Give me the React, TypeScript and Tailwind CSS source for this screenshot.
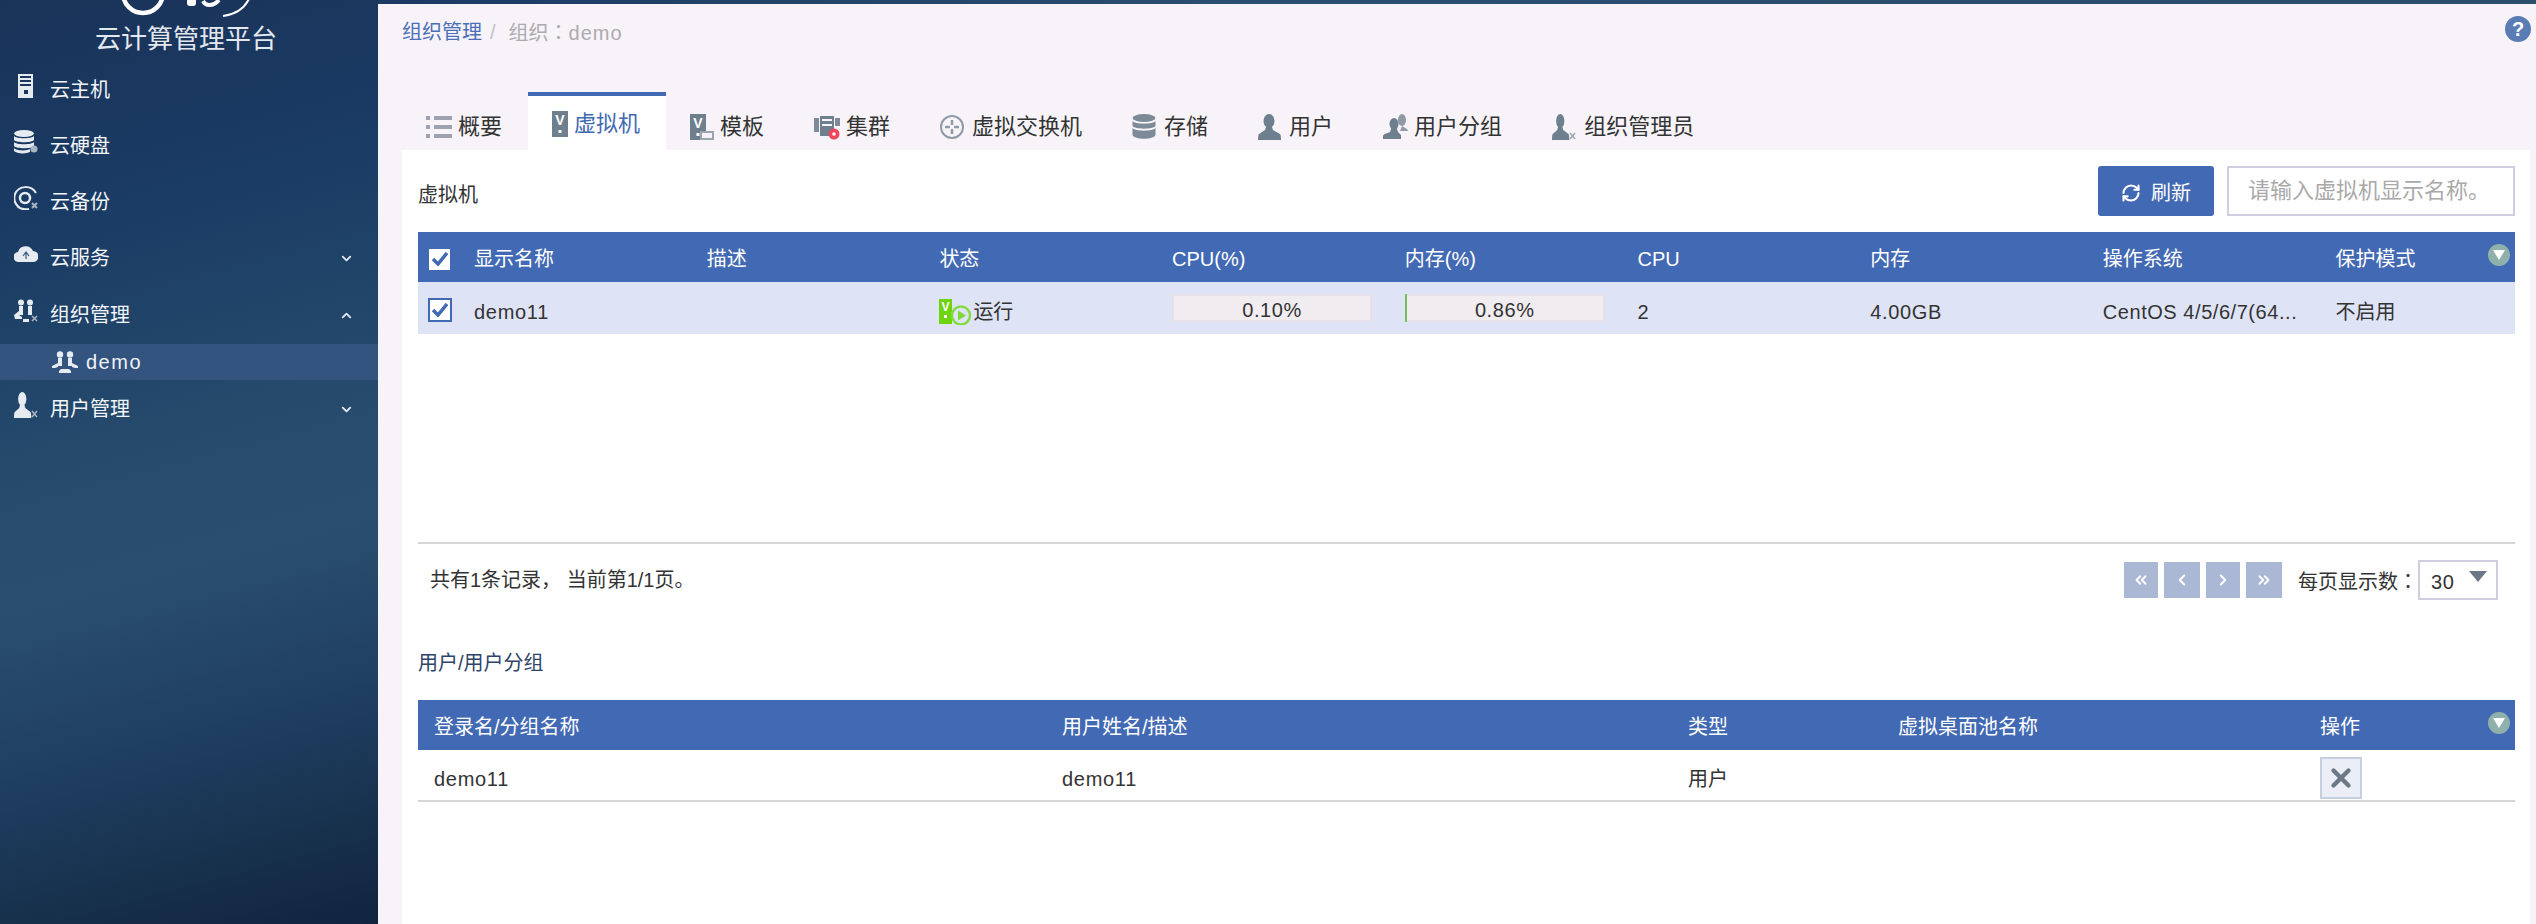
import { ReactNode } from "react"
import { ChevronDown, ChevronLeft, ChevronRight, ChevronUp, ChevronsLeft, ChevronsRight, RefreshCw, X } from "lucide-react"

const FONT = "font-['Liberation_Sans','Noto_Sans_CJK_SC',sans-serif]"
const COLON = "font-['Noto_Sans_CJK_TC',sans-serif]"

//person silhouette used by most of the user related icons
const Person = ({ sx = 1, fill }: { sx?: number; fill: string }) => (
    <g transform={`scale(${sx} 1)`} fill={fill}>
        <ellipse cx="11" cy="7" rx="5.5" ry="7" />
        <path d="M8 13h6l1 3 7 4c1 1 1 4 1 6H0c0-2 0-5 1-6l6-4z" />
    </g>
)

const IconServer = () => (
    <svg width="24" height="24" viewBox="0 0 24 24">
        <path fill="#e6ebf2" fillRule="evenodd" d="M4 0h15v24H4zM6 2v2h11V2zM6 6v2h11V6zM6 10v2h11v-2zM10 16v4h4v-4z" />
    </svg>
)

const IconDisk = ({ fill = "#e6ebf2" }: { fill?: string }) => (
    <svg width="24" height="24" viewBox="0 0 24 24" fill={fill}>
        <ellipse cx="10" cy="3.5" rx="10" ry="3.5" />
        <path d="M0 6c2 3 18 3 20 0v4c-2 3-18 3-20 0z" />
        <path d="M0 12c2 3 18 3 20 0v4c-2 3-18 3-20 0z" />
        <path d="M0 18c2 3 13 3 16 1v3c-4 2-13 2-16-1z" />
        <circle cx="20" cy="19" r="3.5" fill="#aab6c4" />
    </svg>
)

const IconBackup = () => (
    <svg width="24" height="24" viewBox="0 0 24 24" fill="none" stroke="#e6ebf2" strokeWidth="2">
        <path d="M22 7C17-1 5-1 1 8c-1 3-1 5 0 8 3 7 9 8 14 7" />
        <circle cx="11" cy="12" r="5" strokeWidth="2.5" />
        <path d="M18 17l5 5M23 17l-5 5" stroke="#aab6c4" />
    </svg>
)

const IconCloud = () => (
    <svg width="24" height="18" viewBox="0 0 24 18">
        <path fill="#e6ebf2" d="M5 17a5 5 0 0 1-1-10 8 8 0 0 1 15-1 5.500 5.500 0 0 1 0 11z" />
        <path fill="none" stroke="#3a5a80" strokeWidth="1.200" d="M9 11l3-4 3 4M12 8v6" />
    </svg>
)

const IconOrg = () => (
    <svg width="24" height="24" viewBox="0 0 24 24" fill="#e6ebf2">
        <circle cx="7" cy="3.500" r="3" />
        <circle cx="16" cy="3.500" r="3" />
        <path d="M5 7h4v9H5zM14 7h4v9h-4z" />
        <path d="M0 16l5-4v4l3 2v2H1zM9 20h6v3H9z" />
        <path d="M18 17l5 5M23 17l-5 5" stroke="#aab6c4" strokeWidth="1.500" />
    </svg>
)

const IconGroup = () => (
    <svg width="26" height="22" viewBox="0 0 26 22" fill="#e6ebf2">
        <circle cx="8" cy="3.500" r="3.200" />
        <circle cx="18" cy="3.500" r="3.200" />
        <path d="M6 7h4v8H6zM16 7h4v8h-4z" />
        <path d="M0 15l6-3v4l-3 1H0zM26 15l-6-3v4l3 1h3z" />
        <path d="M9 18h8l2 2v2H7v-2z" />
    </svg>
)

const IconUserAdmin = ({ fill = "#e6ebf2", cross = "#aab6c4" }: { fill?: string; cross?: string }) => (
    <svg width="24" height="26" viewBox="0 0 24 26">
        <Person fill={fill} sx={0.75} />
        <path d="M18 19l5 6M23 19l-5 6" stroke={cross} strokeWidth="1.500" />
    </svg>
)

const IconList = () => (
    <svg width="26" height="22" viewBox="0 0 26 22" fill="#9ca2b0">
        <rect y="0" width="4" height="4" />
        <rect x="8" y="0" width="18" height="4" />
        <rect y="9" width="4" height="4" />
        <rect x="8" y="9" width="18" height="4" />
        <rect y="18" width="4" height="4" />
        <rect x="8" y="18" width="18" height="4" />
    </svg>
)

const VBox = ({ fill = "#6e7f8e" }: { fill?: string }) => (
    <g>
        <rect width="16" height="26" fill={fill} />
        <text x="8" y="14" textAnchor="middle" fontSize="14" fontWeight="700" fill="#fff" fontFamily="Liberation Sans">V</text>
        <rect x="6.500" y="19" width="3" height="3" fill="#fff" />
    </g>
)

const IconVm = () => (
    <svg width="16" height="26" viewBox="0 0 16 26"><VBox /></svg>
)

const IconTemplate = () => (
    <svg width="24" height="26" viewBox="0 0 24 26">
        <VBox />
        <rect x="11" y="18" width="12" height="7" fill="#f6f2f7" stroke="#9aa5b0" strokeWidth="2" />
    </svg>
)

const IconCluster = () => (
    <svg width="26" height="26" viewBox="0 0 26 26">
        <path fill="#7d8b99" d="M0 4h5v14H0zM21 4h5v8h-5z" />
        <path fill="#6e7f8e" fillRule="evenodd" d="M6 2h14v20H6zM8 5v2h10V5zM8 10v2h10v-2z" />
        <circle cx="20" cy="20" r="5.500" fill="#f0455a" />
        <circle cx="20" cy="20" r="1.800" fill="#fff" />
    </svg>
)

const IconSwitch = () => (
    <svg width="24" height="26" viewBox="0 0 24 26" fill="none" stroke="#8f9aa6">
        <circle cx="12" cy="13" r="11" strokeWidth="2" />
        <path d="M12 6v5M12 15v5M5 13h5M14 13h5" strokeWidth="2.500" />
    </svg>
)

const IconStorage = () => (
    <svg width="24" height="26" viewBox="0 0 24 26" fill="#7d8b99">
        <ellipse cx="12" cy="4" rx="11.500" ry="4" />
        <path d="M.5 7c2 3.500 21 3.500 23 0v5c-2 3.500-21 3.500-23 0z" />
        <path d="M.5 14c2 3.500 21 3.500 23 0v7c-2 5-21 5-23 0z" />
    </svg>
)

const IconUser = () => (
    <svg width="24" height="26" viewBox="0 0 24 26"><Person fill="#6e7f8e" /></svg>
)

const IconUserGroup = () => (
    <svg width="26" height="26" viewBox="0 0 26 26" fill="#6e7f8e">
        <ellipse cx="19" cy="6" rx="4" ry="6" fill="#8f9aa6" />
        <path d="M19 12c3 2 6 3 6 5h-8z" fill="#8f9aa6" />
        <ellipse cx="11" cy="10" rx="4.500" ry="6" />
        <path d="M8 15h6l1 3 3 3v4H0v-3c0-2 5-3 7-4z" />
    </svg>
)

const IconRunning = () => (
    <svg width="34" height="26" viewBox="0 0 34 26">
        <rect width="13" height="25" fill="#6ed40f" />
        <text x="6.500" y="12" textAnchor="middle" fontSize="12" fontWeight="700" fill="#fff" fontFamily="Liberation Sans">V</text>
        <rect x="5" y="16" width="3" height="3" fill="#fff" />
        <circle cx="22" cy="16.500" r="9" fill="#dfe3f6" stroke="#83dc3f" strokeWidth="2.500" />
        <path d="M19 11.500l8 5-8 5z" fill="#7dd835" />
    </svg>
)

const Logo = () => (
    <svg width="160" height="20" viewBox="0 0 160 20" fill="none" stroke="#fff" className="block ml-[115px]">
        <circle cx="28" cy="-7" r="20" strokeWidth="4.500" />
        <rect x="72" y="-2" width="9" height="8" rx="3" fill="#fff" stroke="none" />
        <path d="M88 1c3 6 11 5 16-1" strokeWidth="4" />
        <path d="M108 16c8-1 20-5 26-17" strokeWidth="2" />
    </svg>
)

type MenuProps = {
    icon: ReactNode
    label: string
    height: string
    arrow?: "up" | "down"
}

function MenuItem({ icon, label, height, arrow }: MenuProps) {
    return (
        <div className={`flex items-center pl-[14px] pr-[24px] text-[20px] text-[#f2f5f9] ${height}`}>
            <div className="w-6 mr-3 -mt-2 flex justify-center">{icon}</div>
            <span>{label}</span>
            {arrow === "down" && <ChevronDown size={15} strokeWidth={3} className="ml-auto text-[#dfe8f2]" />}
            {arrow === "up" && <ChevronUp size={15} strokeWidth={3} className="ml-auto text-[#dfe8f2]" />}
        </div>
    )
}

function Sidebar() {
    return (
        <div className="w-[378px] shrink-0 bg-[linear-gradient(165deg,#1a3359_0%,#1a3b64_22%,#254a6c_46%,#2a4f6e_60%,#1f3f63_76%,#18334f_88%,#11233f_100%)]">
            <div className="h-[62px]">
                <Logo />
                <div className="pl-[95px] text-[26px] leading-[38px] text-[#e3e8ef] whitespace-nowrap">云计算管理平台</div>
            </div>
            <MenuItem icon={<IconServer />} label="云主机" height="h-14" />
            <MenuItem icon={<IconDisk />} label="云硬盘" height="h-14" />
            <MenuItem icon={<IconBackup />} label="云备份" height="h-14" />
            <MenuItem icon={<IconCloud />} label="云服务" height="h-14" arrow="down" />
            <MenuItem icon={<IconOrg />} label="组织管理" height="h-[58px]" arrow="up" />
            <div className="h-9 bg-[#33547f] flex items-center pl-[52px] gap-2 text-[20px] text-[#eef2f7]">
                <IconGroup />
                <span className="tracking-[1.5px]">demo</span>
            </div>
            <MenuItem icon={<IconUserAdmin />} label="用户管理" height="h-[58px]" arrow="down" />
        </div>
    )
}

const tabs: { label: string; icon: ReactNode; gap: string; active?: boolean }[] = [
    { label: "概要", icon: <IconList />, gap: "gap-[6px]" },
    { label: "虚拟机", icon: <IconVm />, gap: "gap-[6px]", active: true },
    { label: "模板", icon: <IconTemplate />, gap: "gap-[6px]" },
    { label: "集群", icon: <IconCluster />, gap: "gap-[6px]" },
    { label: "虚拟交换机", icon: <IconSwitch />, gap: "gap-2" },
    { label: "存储", icon: <IconStorage />, gap: "gap-2" },
    { label: "用户", icon: <IconUser />, gap: "gap-[7px]" },
    { label: "用户分组", icon: <IconUserGroup />, gap: "gap-[5px]" },
    { label: "组织管理员", icon: <IconUserAdmin fill="#6e7f8e" cross="#9aa5b0" />, gap: "gap-2" },
]

function Tabs() {
    return (
        <div className="flex h-[58px] mt-8 ml-[24px] text-[22px] leading-none">
            {tabs.map(tab => (
                <div
                    key={tab.label}
                    className={tab.active
                        ? `flex items-center pl-6 pr-[26px] bg-white border-t-4 border-[#4269b3] text-[#4269b3] pt-[2px] ${tab.gap}`
                        : `flex items-center pl-6 pr-[26px] border-t-4 border-transparent text-[#333] pt-[7px] ${tab.gap}`}
                >
                    {tab.icon}
                    <span>{tab.label}</span>
                </div>
            ))}
        </div>
    )
}

const ToggleCols = () => (
    <div className="absolute right-[5px] top-[12px] w-[22px] h-[22px] rounded-full bg-[#8fb0ab] flex items-center justify-center">
        <svg width="12" height="10" viewBox="0 0 12 10"><path d="M0 0h12L6 10z" fill="#fff" /></svg>
    </div>
)

const CheckBox = ({ header }: { header?: boolean }) => (
    <div className={header
        ? "w-[21px] h-[21px] bg-white flex items-center justify-center"
        : "w-[24px] h-[24px] bg-white border-2 border-[#4269b3] flex items-center justify-center"}>
        <svg width="16" height="14" viewBox="0 0 16 14" fill="none" stroke="#4269b3" strokeWidth="3.500"><path d="M1 7l5 5 9-11" /></svg>
    </div>
)

const Progress = ({ value, barWidth }: { value: string; barWidth: number }) => (
    <div className="relative -mt-[7px] w-[200px] h-[28px] bg-[#f0ecf0] border-2 border-[#e6e1e6] text-center text-[20px] leading-[28px] tracking-[0.6px] text-[#333]">
        <div className="absolute -left-[2px] -top-[2px] -bottom-[2px] bg-[#76bd5c]" style={{ width: barWidth }} />
        {value}
    </div>
)

const vmCols = "grid grid-cols-[56px_repeat(8,232.7px)_1fr] items-center"

function VmTable() {
    return (
        <div>
            <div className={`relative ${vmCols} h-[50px] pt-1 bg-[#4269b3] text-white`}>
                <div className="pl-[11px]"><CheckBox header /></div>
                <div>显示名称</div>
                <div>描述</div>
                <div>状态</div>
                <div>CPU(%)</div>
                <div>内存(%)</div>
                <div>CPU</div>
                <div>内存</div>
                <div>操作系统</div>
                <div>保护模式</div>
                <ToggleCols />
            </div>
            <div className={`${vmCols} h-[52px] pt-[7px] bg-[#dfe3f6] text-[#333]`}>
                <div className="pl-[10px] -mt-[3px]"><CheckBox /></div>
                <div className="tracking-[0.7px]">demo11</div>
                <div />
                <div className="flex items-center"><IconRunning /><span>运行</span></div>
                <div><Progress value="0.10%" barWidth={0} /></div>
                <div><Progress value="0.86%" barWidth={2} /></div>
                <div>2</div>
                <div className="tracking-[0.7px]">4.00GB</div>
                <div className="whitespace-nowrap tracking-[0.55px]">CentOS 4/5/6/7(64...</div>
                <div>不启用</div>
            </div>
            <div className="h-[208px]" />
        </div>
    )
}

const PageButton = ({ width, children }: { width: string; children: ReactNode }) => (
    <div className={`h-9 bg-[#abb8d5] text-white flex items-center justify-center ${width}`}>{children}</div>
)

function Pagination() {
    return (
        <div className="flex items-center border-t-2 border-[#d6d6d6] pt-4 h-[58px] pl-3 pr-[17px] text-[#333]">
            <span className="whitespace-pre">共有1条记录， 当前第1/1页。</span>
            <div className="ml-auto flex items-center gap-[6px]">
                <PageButton width="w-[34px]"><ChevronsLeft size={18} strokeWidth={2.5} /></PageButton>
                <PageButton width="w-9"><ChevronLeft size={18} strokeWidth={2.5} /></PageButton>
                <PageButton width="w-[34px]"><ChevronRight size={18} strokeWidth={2.5} /></PageButton>
                <PageButton width="w-9"><ChevronsRight size={18} strokeWidth={2.5} /></PageButton>
            </div>
            <span className="ml-4 pt-[2px] whitespace-nowrap">每页显示数<span className={COLON}>：</span></span>
            <div className="w-20 h-10 border-2 border-[#cfcde2] flex items-center pl-[11px] pr-[9px]">
                <span className="pt-1 tracking-[0.7px]">30</span>
                <svg width="18" height="11" viewBox="0 0 18 11" className="ml-auto -mt-2"><path d="M0 0h18L9 11z" fill="#6b7885" /></svg>
            </div>
        </div>
    )
}

const userCols = "grid grid-cols-[628px_626px_210px_422px_1fr] items-center pl-4"

function UserTable() {
    return (
        <div>
            <div className={`relative ${userCols} h-[50px] pt-1 bg-[#4269b3] text-white`}>
                <div>登录名/分组名称</div>
                <div>用户姓名/描述</div>
                <div>类型</div>
                <div>虚拟桌面池名称</div>
                <div>操作</div>
                <ToggleCols />
            </div>
            <div className={`${userCols} h-[52px] pt-[6px] border-b-2 border-[#d6d6d6] text-[#333]`}>
                <div className="pt-[2px] tracking-[0.7px]">demo11</div>
                <div className="pt-[2px] tracking-[0.7px]">demo11</div>
                <div className="pt-[2px]">用户</div>
                <div />
                <div className="w-[42px] h-[42px] bg-[#eceef7] border-2 border-[#c5cfdd] flex items-center justify-center text-[#6b7885]">
                    <X size={30} strokeWidth={3.5} />
                </div>
            </div>
        </div>
    )
}

export default function App() {
    return (
        <div className={`flex w-[2536px] h-[924px] overflow-hidden bg-[#f7f3f8] text-[20px] ${FONT}`}>
            <Sidebar />
            <div className="flex-1 flex flex-col min-w-0">
                <div className="h-1 bg-[linear-gradient(90deg,#1c3a62,#2a4e70_40%,#2c4f6e)]" />
                <div className="h-[56px] flex items-center pl-[24px] pr-[5px]">
                    <span className="text-[#4a70b8]">组织管理</span>
                    <span className="text-[#c4c0c6] ml-2 mr-[13px]">/</span>
                    <span className="text-[#aeaaae]">组织<span className={COLON}>：</span><span className="tracking-[1px]">demo</span></span>
                    <div className="ml-auto -mt-[6px] w-[26px] h-[26px] rounded-full bg-[#5a7cb5] text-white font-bold text-[20px] leading-[26px] text-center">?</div>
                </div>
                <Tabs />
                <div className="flex-1 ml-[24px] mr-[6px] bg-white pl-4 pr-[15px] pt-4">
                    <div className="flex items-center h-[50px] mb-4 text-[#333]">
                        <span className="pt-2">虚拟机</span>
                        <button className="ml-auto w-[116px] h-full pt-[3px] bg-[#4269b3] rounded-[3px] text-white flex items-center justify-center gap-[10px]">
                            <RefreshCw size={20} strokeWidth={2.5} />
                            <span>刷新</span>
                        </button>
                        <input
                            placeholder="请输入虚拟机显示名称。"
                            className="ml-[13px] w-[288px] h-full border-2 border-[#cfcde2] pl-[19px] text-[22px] outline-none placeholder:text-[#a9a9a9]"
                        />
                    </div>
                    <VmTable />
                    <Pagination />
                    <div className="h-[100px] flex items-center pt-[26px] text-[#2e4468]">用户/用户分组</div>
                    <UserTable />
                </div>
            </div>
        </div>
    )
}
